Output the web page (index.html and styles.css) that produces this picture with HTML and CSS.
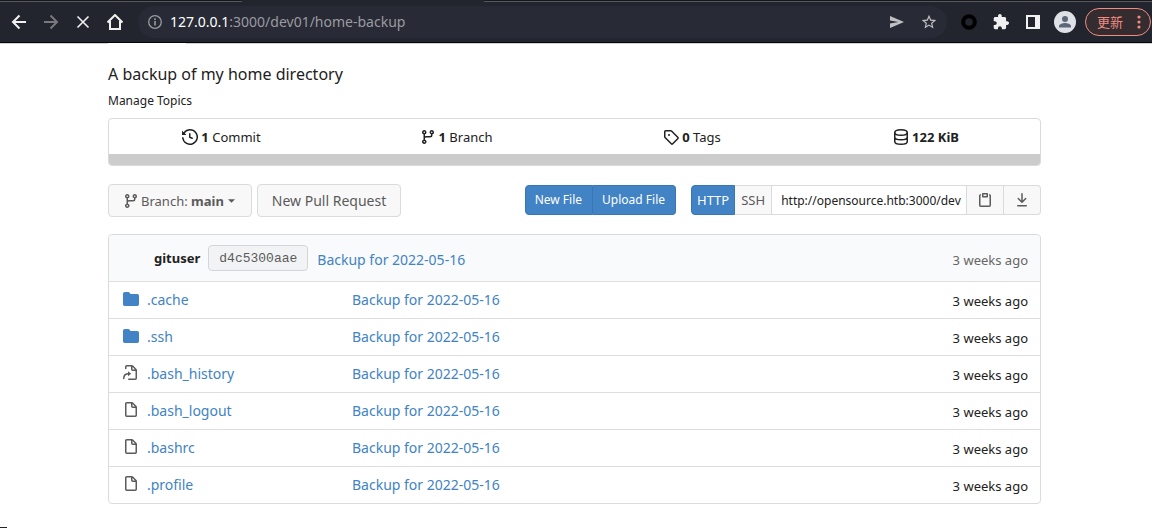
FILE: index.html
```html
<!DOCTYPE html>
<html lang="en">
<head>
<meta charset="utf-8">
<title>dev01/home-backup</title>
<link rel="stylesheet" href="styles.css">
</head>
<body>
<svg class="sprite" aria-hidden="true">
  <symbol id="branch" viewBox="0 0 16 16"><path fill-rule="evenodd" d="M11.75 2.5a.75.75 0 100 1.5.75.75 0 000-1.5zm-2.25.75a2.25 2.25 0 113 2.122V6A2.5 2.5 0 0110 8.5H6a1 1 0 00-1 1v1.128a2.251 2.251 0 11-1.5 0V5.372a2.25 2.25 0 111.5 0v1.836A2.492 2.492 0 016 7h4a1 1 0 001-1v-.628A2.25 2.25 0 019.5 3.25zM4.25 12a.75.75 0 100 1.5.75.75 0 000-1.5zM3.5 3.25a.75.75 0 111.5 0 .75.75 0 01-1.5 0z"/></symbol>
  <symbol id="folder" viewBox="0 0 16 16"><path d="M1.75 1A1.75 1.75 0 000 2.75v10.5C0 14.216.784 15 1.75 15h12.5A1.75 1.75 0 0016 13.25v-8.5A1.75 1.75 0 0014.25 3h-6.5a.25.25 0 01-.2-.1l-.9-1.2c-.33-.44-.85-.7-1.4-.7h-3.5z"/></symbol>
  <symbol id="file" viewBox="0 0 16 16"><path fill-rule="evenodd" d="M3.75 1.5a.25.25 0 00-.25.25v11.5c0 .138.112.25.25.25h8.5a.25.25 0 00.25-.25V6H9.75A1.75 1.75 0 018 4.25V1.5H3.75zm5.75.56v2.19c0 .138.112.25.25.25h2.19L9.5 2.06zM2 1.75C2 .784 2.784 0 3.75 0h5.086c.464 0 .909.184 1.237.513l3.414 3.414c.329.328.513.773.513 1.237v8.086A1.75 1.75 0 0112.25 15h-8.5A1.75 1.75 0 012 13.25V1.75z"/></symbol>
  <symbol id="symlink" viewBox="0 0 16 16"><g fill="none" stroke="currentColor" stroke-width="1.5" stroke-linecap="round" stroke-linejoin="round"><path d="M2.750 3.500V1.750a1 1 0 011-1h5.100c.3 0 .5.1.7.3l3.400 3.400c.2.2.3.4.3.7v8.100a1 1 0 01-1 1h-6.500M8.750 1v3.250a1 1 0 001 1h3.200M.750 13.500c0-3 1.600-4.700 4.800-4.700"/></g><path d="M5 6.300v5l3.200-2.500z"/></symbol>
</svg>

<header class="browser">
  <div class="tab-edge"><i class="edge-left"></i><i class="edge-right"></i></div>
  <nav class="nav" aria-label="Browser">
    <button class="tool" aria-label="Back"><svg viewBox="0 0 16 16"><path class="line" d="M15 8H2.500M8.500 1.500L2 8l6.500 6.500"/></svg></button>
    <button class="tool dim" aria-label="Forward"><svg viewBox="0 0 16 16"><path class="line" d="M1 8h12.500M7.500 1.500L14 8l-6.500 6.500"/></svg></button>
    <button class="tool" aria-label="Stop"><svg viewBox="0 0 16 16"><path class="line thin" d="M2.500 2.500l11 11M13.500 2.500l-11 11"/></svg></button>
    <button class="tool" aria-label="Home"><svg viewBox="0 0 16 16"><path class="line" d="M.5 8.500L8 1l7.500 7.500M3 7v8h10V7"/></svg></button>
  </nav>
  <div class="omnibox">
    <svg class="info" viewBox="0 0 16 16"><circle cx="8" cy="8" r="6.300" fill="none" stroke="currentColor" stroke-width="1.300"/><path d="M7.200 7h1.600v4.500H7.200zM7.200 4.300h1.600v1.600H7.200z"/></svg>
    <div class="url"><b>127.0.0.1</b>:3000/dev01/home-backup</div>
    <button class="tool soft" aria-label="Send"><svg viewBox="0 0 16 16"><path d="M1 2l14 6-14 6V9.500L9.500 8 1 6.500z"/></svg></button>
    <button class="tool soft" aria-label="Bookmark"><svg viewBox="1 1 22 22"><path d="M22 9.240l-7.190-.62L12 2 9.190 8.630 2 9.240l5.460 4.730L5.820 21 12 17.270 18.180 21l-1.630-7.030L22 9.240zM12 15.400l-3.760 2.270 1-4.280-3.320-2.880 4.380-.38L12 6.100l1.710 4.040 4.380.38-3.320 2.880 1 4.280L12 15.400z"/></svg></button>
  </div>
  <div class="extensions">
    <button class="tool" aria-label="Extension"><svg viewBox="0 0 16 16"><circle cx="8" cy="8" r="5.800" fill="none" stroke="#000" stroke-width="4"/></svg></button>
    <button class="tool" aria-label="Extensions"><svg viewBox="1 1 22 22"><path d="M20.500 11H19V7c0-1.100-.9-2-2-2h-4V3.500C13 2.120 11.880 1 10.500 1S8 2.120 8 3.500V5H4c-1.100 0-1.990.9-1.990 2v3.800H3.500c1.490 0 2.700 1.210 2.700 2.700s-1.210 2.700-2.700 2.700H2V20c0 1.100.9 2 2 2h3.800v-1.500c0-1.490 1.210-2.700 2.700-2.700s2.700 1.210 2.700 2.700V22H17c1.100 0 2-.9 2-2v-4h1.500c1.380 0 2.500-1.120 2.500-2.500S21.880 11 20.500 11z"/></svg></button>
    <button class="tool" aria-label="Side panel"><svg viewBox="0 0 16 16"><path fill-rule="evenodd" d="M1 1h14v14H1zM3 3v10h7V3z"/></svg></button>
    <button class="avatar" aria-label="Profile"><svg viewBox="0 0 22 22"><circle cx="11" cy="8" r="3"/><path d="M5 16.500v-1.500c0-2 4-3 6-3s6 1 6 3v1.500z"/></svg></button>
  </div>
  <button class="update">更新<svg viewBox="0 0 4 16"><circle cx="2" cy="3" r="1.600"/><circle cx="2" cy="8" r="1.600"/><circle cx="2" cy="13" r="1.600"/></svg></button>
</header>

<div class="tab-rule"><i></i></div>
<main class="page">
  <h1 class="description">A backup of my home directory</h1>
  <a class="topics" href="#">Manage Topics</a>

  <section class="summary">
    <div class="stats">
      <a href="#"><svg class="icon" viewBox="0 0 16 16"><path fill-rule="evenodd" d="M1.643 3.143L.427 1.927A.25.25 0 000 2.104V5.750c0 .138.112.25.25.25h3.646a.25.25 0 00.177-.427L2.715 4.215a6.500 6.500 0 11-1.180 4.458.75.75 0 10-1.493.154 8.001 8.001 0 101.600-5.684zM7.750 4a.75.75 0 01.75.75v2.992l2.028.812a.75.75 0 01-.557 1.392l-2.500-1A.75.75 0 017 8.250v-3.500A.75.75 0 017.750 4z"/></svg><span><b>1</b> Commit</span></a>
      <a href="#"><svg class="icon" viewBox="0 0 16 16"><use href="#branch"/></svg><span><b>1</b> Branch</span></a>
      <a href="#"><svg class="icon" viewBox="0 0 16 16"><path fill-rule="evenodd" d="M2.500 7.775V2.750a.25.25 0 01.25-.25h5.025a.25.25 0 01.177.073l6.250 6.250a.25.25 0 010 .354l-5.025 5.025a.25.25 0 01-.354 0l-6.250-6.250a.25.25 0 01-.073-.177zm-1.500 0V2.750C1 1.784 1.784 1 2.750 1h5.025c.464 0 .91.184 1.238.513l6.250 6.250a1.750 1.750 0 010 2.474l-5.026 5.026a1.750 1.750 0 01-2.474 0l-6.250-6.250A1.750 1.750 0 011 7.775zM6 5a1 1 0 100 2 1 1 0 000-2z"/></svg><span><b>0</b> Tags</span></a>
      <div class="size"><svg class="icon" viewBox="0 0 16 16"><g fill="none" stroke="currentColor" stroke-width="1.500"><ellipse cx="8" cy="3.500" rx="6.250" ry="2.750"/><path d="M1.750 3.500v9c0 1.500 2.800 2.750 6.250 2.750s6.250-1.250 6.250-2.750v-9M1.750 8c0 1.500 2.800 2.750 6.250 2.750S14.250 9.500 14.250 8"/></g></svg><b>122 KiB</b></div>
    </div>
    <div class="language-bar"></div>
  </section>

  <section class="actions">
    <button class="btn branch"><svg class="icon" viewBox="0 0 16 16"><use href="#branch"/></svg><span>Branch: <b>main</b></span><svg class="caret" viewBox="0 0 8 4"><path d="M0 0h8L4 4z"/></svg></button>
    <button class="btn pull">New Pull Request</button>
    <div class="group files-group">
      <button class="primary">New File</button>
      <button class="primary">Upload File</button>
    </div>
    <div class="group clone">
      <button class="selected">HTTP</button>
      <button>SSH</button>
      <input aria-label="Clone address" value="http://opensource.htb:3000/dev" readonly>
      <button class="square" aria-label="Copy"><svg class="icon" viewBox="0 0 16 16"><path fill-rule="evenodd" d="M5.750 1a.75.75 0 00-.75.75v3c0 .414.336.75.75.75h4.500a.75.75 0 00.75-.75v-3a.75.75 0 00-.75-.75h-4.500zm.75 3V2.500h3V4h-3zm-2.874-.467a.75.75 0 00-.752-1.298A1.750 1.750 0 002 3.750v9.500c0 .966.784 1.750 1.750 1.750h8.500A1.750 1.750 0 0014 13.250v-9.500a1.750 1.750 0 00-.874-1.515.75.75 0 10-.752 1.298.25.25 0 01.126.217v9.500a.25.25 0 01-.25.25h-8.500a.25.25 0 01-.25-.25v-9.500a.25.25 0 01.126-.217z"/></svg></button>
      <button class="square" aria-label="Download"><svg class="icon" viewBox="0 0 16 16"><path d="M7.470 10.780a.75.75 0 001.060 0l3.750-3.750a.75.75 0 00-1.060-1.060L8.750 8.440V1.750a.75.75 0 00-1.500 0v6.690L4.780 5.970a.75.75 0 00-1.060 1.060l3.750 3.750zM3.750 13a.75.75 0 000 1.500h8.500a.75.75 0 000-1.500h-8.500z"/></svg></button>
    </div>
  </section>

  <table class="files">
    <colgroup><col class="col-name"><col><col class="col-age"></colgroup>
    <thead>
      <tr><th colspan="2"><div class="commit"><strong>gituser</strong><a class="sha" href="#">d4c5300aae</a><a class="message" href="#">Backup for 2022-05-16</a></div></th><th class="age">3 weeks ago</th></tr>
    </thead>
    <tbody>
      <tr><td><div class="name"><svg class="icon folder" viewBox="0 0 16 16"><use href="#folder"/></svg><a href="#">.cache</a></div></td><td><a href="#">Backup for 2022-05-16</a></td><td class="age">3 weeks ago</td></tr>
      <tr><td><div class="name"><svg class="icon folder" viewBox="0 0 16 16"><use href="#folder"/></svg><a href="#">.ssh</a></div></td><td><a href="#">Backup for 2022-05-16</a></td><td class="age">3 weeks ago</td></tr>
      <tr><td><div class="name"><svg class="icon" viewBox="0 0 16 16"><use href="#symlink"/></svg><a href="#">.bash_history</a></div></td><td><a href="#">Backup for 2022-05-16</a></td><td class="age">3 weeks ago</td></tr>
      <tr><td><div class="name"><svg class="icon" viewBox="0 0 16 16"><use href="#file"/></svg><a href="#">.bash_logout</a></div></td><td><a href="#">Backup for 2022-05-16</a></td><td class="age">3 weeks ago</td></tr>
      <tr><td><div class="name"><svg class="icon" viewBox="0 0 16 16"><use href="#file"/></svg><a href="#">.bashrc</a></div></td><td><a href="#">Backup for 2022-05-16</a></td><td class="age">3 weeks ago</td></tr>
      <tr><td><div class="name"><svg class="icon" viewBox="0 0 16 16"><use href="#file"/></svg><a href="#">.profile</a></div></td><td><a href="#">Backup for 2022-05-16</a></td><td class="age">3 weeks ago</td></tr>
    </tbody>
  </table>
</main>
<div class="status-edge"></div>
</body>
</html>
```

FILE: styles.css
```css
* { box-sizing: border-box; }
body {
  margin: 0;
  background: #fff;
  color: #212121;
  font: 14px/20px "Noto Sans", "Noto Sans CJK SC", sans-serif;
}
a { color: #4183c4; text-decoration: none; }
button { margin: 0; font: inherit; cursor: pointer; }
svg { display: block; fill: currentColor; flex: none; }
.sprite { position: absolute; width: 0; height: 0; }
.icon { width: 16px; height: 16px; }
.line { fill: none; stroke: currentColor; stroke-width: 2; }
.thin { stroke-width: 1.6; }

/* Browser toolbar */
.browser {
  position: relative;
  display: flex;
  align-items: center;
  height: 43px;
  padding: 1px 1px 0 3px;
  background: #22252d;
  border-bottom: 1px solid #050608;
}
.tab-edge {
  position: absolute;
  inset: 0 0 auto;
  display: flex;
  justify-content: space-between;
  height: 2px;
}
.edge-left { width: 21%; background: #17181d; border-bottom: 1px solid #56585d; }
.edge-right { width: 58%; background: #17181d; border-bottom: 1px solid #56585d; }
.nav { display: flex; }
.tool {
  display: flex;
  align-items: center;
  justify-content: center;
  width: 32px;
  height: 32px;
  padding: 0;
  border: 0;
  background: none;
  color: #f1f1f1;
}
.tool svg { width: 16px; height: 16px; }
.dim { color: #77797d; }
.soft { color: #c0c1c3; }
.omnibox {
  display: flex;
  flex: 1;
  align-items: center;
  height: 32px;
  margin-left: 7px;
  padding: 0 2px 0 9px;
  border-radius: 16px;
  background: #282a35;
  color: #999ba1;
}
.info { width: 16px; height: 16px; margin-right: 7px; }
.url { flex: 1; }
.url b { color: #fff; font-weight: 400; }
.extensions { display: flex; align-items: center; margin-left: 6px; }
.avatar {
  width: 22px;
  height: 22px;
  margin: 0 9px 0 5px;
  padding: 0;
  border: 0;
  border-radius: 50%;
  background: #dee1e6;
  color: #5c6779;
}
.update {
  display: flex;
  align-items: center;
  justify-content: space-between;
  width: 66px;
  height: 28px;
  padding: 0 9px 0 11px;
  border: 1px solid #f28b82;
  border-radius: 14px;
  background: #352c2f;
  color: #f28b82;
  font-size: 13px;
}
.update svg { width: 4px; height: 16px; }

/* Repository page */
.tab-rule { height: 1px; padding-left: 108px; background: #d4d4d5; }
.tab-rule i { display: block; width: 78px; height: 1px; background: #fff; }
.page { padding: 18px 111px 24px 108px; }
.description { margin: 0; font-size: 16px; font-weight: 400; line-height: 24px; }
.topics { display: block; margin-top: 5px; color: #212121; font-size: 12px; line-height: 20px; }
.summary {
  margin-top: 7px;
  overflow: hidden;
  border: 1px solid #d9dadb;
  border-radius: 4px;
}
.stats { display: grid; grid-template-columns: 225fr 244fr 228fr 234fr; }
.stats > * {
  display: flex;
  align-items: center;
  justify-content: center;
  gap: 3px;
  height: 35px;
  color: #212121;
  font-size: 13px;
}
.stats .size { padding-left: 6px; }
.language-bar { height: 11px; background: #ccc; }
.actions { display: flex; align-items: flex-start; margin-top: 18px; }
.btn {
  display: flex;
  align-items: center;
  height: 33px;
  border: 1px solid #dadbdc;
  border-radius: 4px;
  background: #f8f8f8;
  color: #5b5b5b;
}
.branch { gap: 2px; padding: 0 16px 0 14px; font-size: 13px; }
.caret { width: 7px; height: 4px; margin-left: 2px; }
.pull { margin-left: 5px; padding: 0 14px; }
.group { display: flex; height: 30px; margin-top: 1px; }
.files-group { margin-left: auto; }
.primary, .selected {
  border: 1px solid #3a76b1;
  background: #4183c4;
  color: #fff;
}
.primary { padding: 0 10px 0 9px; font-size: 12px; }
.primary + .primary { border-left: 0; }
.group > :first-child { border-radius: 4px 0 0 4px; }
.group > :last-child { border-radius: 0 4px 4px 0; }
.clone { width: 350px; margin-left: 15px; }
.clone button {
  padding: 0 6px;
  border: 1px solid #dadbdc;
  border-left: 0;
  background: #f8f8f8;
  color: #5b5b5b;
  font-size: 13px;
}
.clone .selected { padding: 0 5px; border: 1px solid #3a76b1; background: #4183c4; color: #fff; }
.clone input {
  flex: 1;
  min-width: 0;
  padding: 0 4px 0 9px;
  border: 1px solid #dadbdc;
  border-left: 0;
  color: #212121;
  font: 12px "Noto Sans", sans-serif;
}
.clone .square { display: flex; align-items: center; justify-content: center; width: 37px; padding: 0; }

.files {
  width: 100%;
  margin-top: 17px;
  border: 1px solid #dadbdc;
  border-radius: 4px;
  border-spacing: 0;
  table-layout: fixed;
}
.col-name { width: 231px; }
.col-age { width: 120px; }
.files th {
  height: 46px;
  padding: 0 12px;
  background: #f9fafb;
  font-weight: 400;
  text-align: left;
}
.files thead th:first-child { border-radius: 4px 0 0; }
.files thead th:last-child { border-radius: 0 4px 0 0; }
.files td { height: 37px; padding: 0 12px; border-top: 1px solid #dededf; }
.files .age { padding-top: 2px; font-size: 13px; text-align: right; }
.files th.age { padding-top: 0; color: #666; }
.commit { display: flex; align-items: center; padding-left: 33px; }
.commit strong { font-size: 13px; }
.commit .message { padding-top: 4px; }
.sha {
  margin: 0 9px 0 8px;
  padding: 2px 10px 0;
  border: 1px solid #d4d5d7;
  border-radius: 4px;
  background: #f2f3f4;
  color: #5b5b5b;
  font: 13px/22px "Liberation Mono", monospace;
}
.files th.age { padding-top: 4px; }
.name { display: flex; align-items: center; gap: 8px; padding-left: 2px; }
.name .icon { margin-bottom: 2px; color: #5b5b5b; }
.name .folder { color: #4183c4; }
.status-edge { position: fixed; bottom: 0; left: 0; width: 7px; height: 1px; background: #22252d; }
```
